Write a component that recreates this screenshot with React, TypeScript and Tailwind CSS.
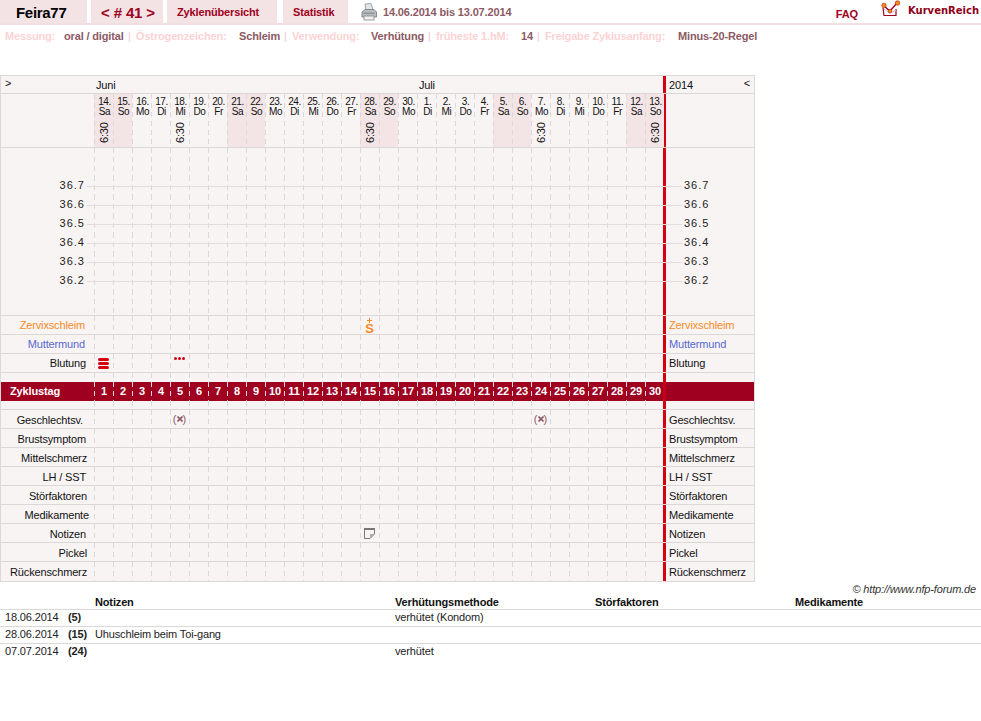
import React from "react";

const days: [string, string][] = [
  ["14.", "Sa"], ["15.", "So"], ["16.", "Mo"], ["17.", "Di"], ["18.", "Mi"], ["19.", "Do"], ["20.", "Fr"],
  ["21.", "Sa"], ["22.", "So"], ["23.", "Mo"], ["24.", "Di"], ["25.", "Mi"], ["26.", "Do"], ["27.", "Fr"],
  ["28.", "Sa"], ["29.", "So"], ["30.", "Mo"], ["1.", "Di"], ["2.", "Mi"], ["3.", "Do"], ["4.", "Fr"],
  ["5.", "Sa"], ["6.", "So"], ["7.", "Mo"], ["8.", "Di"], ["9.", "Mi"], ["10.", "Do"], ["11.", "Fr"],
  ["12.", "Sa"], ["13.", "So"],
];
const times = new Set([0, 4, 14, 23, 29]);

const dash = "bg-[linear-gradient(to_bottom,#ddd8d8_5px,transparent_5px)] bg-[length:1px_9px] bg-repeat-y bg-left-top";

function Cell({ children, cls = "" }: { children?: React.ReactNode; cls?: string }) {
  return <div className={"w-[19px] shrink-0 flex items-center justify-center " + dash + " " + cls}>{children}</div>;
}

function Printer() {
  return (
    <svg width="16" height="18" viewBox="0 0 16 18">
      <path d="M4 1 L10 0.5 L12 7 L5 8 Z" fill="#dfe6ec" stroke="#8a9298" strokeWidth="0.8" />
      <path d="M1 9 L4 6.5 L13 6.5 L15.5 9 L15.5 14 L1 14 Z" fill="#b9bec2" stroke="#777" strokeWidth="0.8" />
      <rect x="3" y="13" width="10" height="4" fill="#eef0f1" stroke="#888" strokeWidth="0.8" />
      <rect x="2.5" y="9.5" width="11" height="1.5" fill="#8d9397" />
    </svg>
  );
}

function Logo() {
  return (
    <svg width="22" height="18" viewBox="0 0 22 18">
      <path d="M2 8 L3 15.5 L15 15.5 L15 9" fill="none" stroke="#a00020" strokeWidth="1.2" />
      <path d="M3 6 L9 11 L16 3" fill="none" stroke="#a00020" strokeWidth="1.4" />
      <path d="M3 9 L9 13.5 L15 10" fill="none" stroke="#e4b9bf" strokeWidth="1" />
      <circle cx="3" cy="5.5" r="2.3" fill="#f08c10" stroke="#a00020" strokeWidth="0.5" />
      <circle cx="9" cy="11" r="1.9" fill="#f08c10" stroke="#a00020" strokeWidth="0.5" />
      <circle cx="16.5" cy="3" r="2.3" fill="#f08c10" stroke="#a00020" strokeWidth="0.5" />
    </svg>
  );
}

function Row({
  label,
  right,
  labelCls = "text-[#111] justify-end pr-[5px]",
  rightCls = "text-[#111]",
  marks = {},
  cls = "h-[19px]",
}: {
  label?: string;
  right?: string;
  labelCls?: string;
  rightCls?: string;
  marks?: Record<number, React.ReactNode>;
  cls?: string;
}) {
  return (
    <div className={"flex border-b border-[#ddd8d8] " + cls}>
      <div className={"w-[93px] shrink-0 flex items-center " + labelCls}>{label}</div>
      {days.map((_, i) => (
        <Cell key={i}>{marks[i]}</Cell>
      ))}
      <div className={"flex-1 border-l-[3px] border-[#d4000f] ml-[-1px] pl-[3px] flex items-center " + rightCls}>{right}</div>
    </div>
  );
}

const temps = ["36.7", "36.6", "36.5", "36.4", "36.3", "36.2"];

function TempRow({ t }: { t: string }) {
  return (
    <div className="flex h-[19px] relative">
      <div className="w-[93px] shrink-0 text-right pr-[9px] text-[11px] leading-[19px] tracking-[1px] text-[#222]">{t}</div>
      {days.map((_, i) => (
        <Cell key={i} />
      ))}
      <div className="flex-1 border-l-[3px] border-[#d4000f] ml-[-1px] pl-[18px] leading-[19px] tracking-[1px] text-[#222]">{t}</div>
      <div className="absolute left-[86px] w-[595px] top-[10px] h-px bg-[#e2dddd]" />
    </div>
  );
}

function SpacerRow({ h }: { h: string }) {
  return (
    <div className={"flex " + h}>
      <div className="w-[93px] shrink-0" />
      {days.map((_, i) => (
        <Cell key={i} />
      ))}
      <div className="flex-1 border-l-[3px] border-[#d4000f] ml-[-1px]" />
    </div>
  );
}

function Cross() {
  return (
    <span className="flex items-center text-[11px] leading-[11px] text-[#8c5a64] tracking-normal">
      <span>(</span>
      <svg width="6" height="6" viewBox="0 0 6 6">
        <path d="M0.5 0.5 L5.5 5.5 M5.5 0.5 L0.5 5.5" stroke="#8c5a64" strokeWidth="1.6" />
      </svg>
      <span>)</span>
    </span>
  );
}

const low = "text-[#111] justify-end pt-[2px] ";

export default function App() {
  return (
    <div className="w-[981px] h-[721px] bg-white overflow-hidden text-[11px] tracking-[-0.15px] font-['Liberation_Sans',Arial,sans-serif] text-[#111]">
      {/* top navigation */}
      <div className="h-[25px] border-b-2 border-[#f3dfe1] flex items-stretch">
        <div className="w-[87px] bg-[#f3e3e5] pl-[16px] text-[15px] leading-[25px] font-bold text-black tracking-[-0.3px]">Feira77</div>
        <div className="ml-[4px] w-[72px] bg-[#f3e3e5] pl-[2px] text-center text-[15px] leading-[25px] font-bold text-[#a00020]">&lt; # 41 &gt;</div>
        <div className="ml-[4px] w-[110px] bg-[#f3e3e5] pl-[10px] leading-[25px] font-bold text-[#a00020]">Zyklenübersicht</div>
        <div className="ml-[6px] w-[65px] bg-[#f3e3e5] pl-[10px] leading-[25px] font-bold text-[#a00020]">Statistik</div>
        <div className="ml-[13px] pt-[3px] w-[22px]"><Printer /></div>
        <div className="leading-[25px] font-bold text-[#8c5a64]">14.06.2014 bis 13.07.2014</div>
        <div className="ml-auto mr-[23px] pt-[7px] leading-[14px] font-bold text-[#a00020]">FAQ</div>
        <div className="w-[100px] flex items-start">
          <Logo />
          <span className="ml-[5px] pt-[4px] text-[10px] leading-[14px] tracking-normal font-bold text-[#8f0018] font-['DejaVu_Sans',sans-serif]">KurvenReich</span>
        </div>
      </div>

      {/* settings line */}
      <div className="h-[20px] flex items-center pt-[2px] pl-[5px] font-bold leading-[18px] whitespace-nowrap">
        <span className="w-[59px] text-[#fbd3d5]">Messung:</span>
        <span className="w-[64px] text-[#8c5a64]">oral / digital</span>
        <span className="w-[8px] text-[#f8c8cb] font-normal">|</span>
        <span className="w-[103px] text-[#fbd3d5]">Östrogenzeichen:</span>
        <span className="w-[45px] text-[#8c5a64]">Schleim</span>
        <span className="w-[8px] text-[#f8c8cb] font-normal">|</span>
        <span className="w-[79px] text-[#fbd3d5]">Verwendung:</span>
        <span className="w-[57px] text-[#8c5a64]">Verhütung</span>
        <span className="w-[8px] text-[#f8c8cb] font-normal">|</span>
        <span className="w-[85px] text-[#fbd3d5]">früheste 1.hM:</span>
        <span className="w-[16px] text-[#8c5a64]">14</span>
        <span className="w-[8px] text-[#f8c8cb] font-normal">|</span>
        <span className="w-[133px] text-[#fbd3d5]">Freigabe Zyklusanfang:</span>
        <span className="text-[#8c5a64]">Minus-20-Regel</span>
      </div>

      {/* chart table */}
      <div className="mt-[30px] w-[755px] bg-[#f9f4f4] border border-[#ddd8d8] text-[#111]">
        {/* month row */}
        <div className="flex h-[18px] border-b border-[#ddd8d8]">
          <div className="w-[93px] shrink-0 pl-[4px] leading-[15px]">&gt;</div>
          <div className="w-[325px] shrink-0 pl-[2px] leading-[19px]">Juni</div>
          <div className="w-[244px] shrink-0 leading-[19px]">Juli</div>
          <div className="flex-1 border-l-[3px] border-[#d4000f] pl-[3px] leading-[19px] flex justify-between">
            <span>2014</span>
            <span className="pr-[4px] leading-[15px]">&lt;</span>
          </div>
        </div>
        {/* dates row */}
        <div className="flex h-[54px] border-b border-[#ddd8d8]">
          <div className="w-[93px] shrink-0" />
          {days.map(([d, w], i) => (
            <div
              key={i}
              className={
                "w-[19px] shrink-0 relative text-center text-[10px] leading-[10px] pt-[3px] pl-[2px] tracking-[-0.4px] " +
                dash +
                " " +
                (w === "Sa" || w === "So" ? "bg-[#f3e4e6]" : "")
              }
            >
              <div>{d}</div>
              <div>{w}</div>
              {times.has(i) && (
                <div className="absolute left-[4px] top-[28px] text-[11px] leading-[12px] tracking-[-0.2px] [writing-mode:vertical-rl] rotate-180 h-[22px] text-center">6:30</div>
              )}
            </div>
          ))}
          <div className="flex-1 border-l-[3px] border-[#d4000f] ml-[-1px]" />
        </div>
        {/* temperature chart */}
        <div className="border-b border-[#ddd8d8]">
          <SpacerRow h="h-[28px]" />
          {temps.map((t) => (
            <TempRow key={t} t={t} />
          ))}
          <SpacerRow h="h-[25px]" />
        </div>
        <Row
          label="Zervixschleim"
          labelCls="text-[#f58a1f] justify-end pr-[9px]"
          right="Zervixschleim"
          rightCls="text-[#f58a1f]"
          marks={{
            14: (
              <span className="flex flex-col items-center text-[#f58a1f] font-bold">
                <svg width="5" height="5" viewBox="0 0 5 5" className="mb-px">
                  <path d="M0 2.5 H5 M2.5 0 V5" stroke="#f58a1f" strokeWidth="1" />
                </svg>
                <span className="text-[13px] leading-[9px]">S</span>
              </span>
            ),
          }}
        />
        <Row label="Muttermund" labelCls="text-[#5568d0] justify-end pr-[9px]" right="Muttermund" rightCls="text-[#5568d0]" />
        <Row
          label="Blutung"
          labelCls="text-[#111] justify-end pr-[8px]"
          right="Blutung"
          marks={{
            0: (
              <span className="flex flex-col gap-px">
                <span className="block w-[11px] h-[3px] rounded-[2px] bg-[#d4000f]" />
                <span className="block w-[11px] h-[3px] rounded-[2px] bg-[#d4000f]" />
                <span className="block w-[11px] h-[3px] rounded-[2px] bg-[#d4000f]" />
              </span>
            ),
            4: (
              <span className="flex gap-px -mt-[9px]">
                <span className="block w-[3px] h-[3px] rounded-full bg-[#d4000f]" />
                <span className="block w-[3px] h-[3px] rounded-full bg-[#d4000f]" />
                <span className="block w-[3px] h-[3px] rounded-full bg-[#d4000f]" />
              </span>
            ),
          }}
        />
        <SpacerRow h="h-[9px]" />
        {/* cycle day band */}
        <div className="flex h-[19px] bg-[#a00020] text-white font-bold tracking-normal">
          <div className="w-[93px] shrink-0 pl-[9px] leading-[19px] tracking-[-0.15px]">Zyklustag</div>
          {days.map((_, i) => (
            <div
              key={i}
              className="w-[19px] shrink-0 pl-px text-center leading-[19px] bg-[linear-gradient(to_bottom,#eed5d9_5px,transparent_5px)] bg-[length:1px_9px] bg-repeat-y bg-left-top"
            >
              {i + 1}
            </div>
          ))}
          <div className="flex-1 border-l-[3px] border-[#c40018] ml-[-1px]" />
        </div>
        <Row cls="h-[9px]" />
        <Row
          label="Geschlechtsv."
          labelCls={low + "pr-[11px]"}
          rightCls="text-[#111] pt-[2px]"
          right="Geschlechtsv."
          marks={{ 4: <Cross />, 23: <Cross /> }}
        />
        <Row label="Brustsymptom" labelCls={low + "pr-[8px]"} rightCls="text-[#111] pt-[2px]" right="Brustsymptom" />
        <Row label="Mittelschmerz" labelCls={low + "pr-[7px]"} rightCls="text-[#111] pt-[2px]" right="Mittelschmerz" />
        <Row label="LH / SST" labelCls={low + "pr-[8px]"} rightCls="text-[#111] pt-[2px]" right="LH / SST" />
        <Row label="Störfaktoren" labelCls={low + "pr-[7px]"} rightCls="text-[#111] pt-[2px]" right="Störfaktoren" />
        <Row label="Medikamente" labelCls={low + "pr-[5px]"} rightCls="text-[#111] pt-[2px]" right="Medikamente" />
        <Row
          label="Notizen"
          labelCls={low + "pr-[8px]"}
          rightCls="text-[#111] pt-[2px]"
          right="Notizen"
          marks={{
            14: (
              <svg width="11" height="11" viewBox="0 0 11 11">
                <path d="M0.5 0.5 H10.5 V6 L6 10.5 H0.5 Z" fill="#f7f3ef" stroke="#777" />
                <rect x="0" y="0" width="11" height="2" fill="#777" />
                <path d="M6 10 V6 H10 Z" fill="#aaa" />
              </svg>
            ),
          }}
        />
        <Row label="Pickel" labelCls={low + "pr-[7px]"} rightCls="text-[#111] pt-[2px]" right="Pickel" />
        <Row label="Rückenschmerz" labelCls={low + "pr-[7px]"} rightCls="text-[#111] pt-[2px]" right="Rückenschmerz" cls="h-[19px] !border-b-0" />
      </div>

      {/* copyright */}
      <div className="h-[14px] pr-[5px] text-right italic text-[#333] leading-[14px]">© http://www.nfp-forum.de</div>

      {/* notes table */}
      <div className="grid grid-cols-[5px_63px_27px_300px_200px_200px_1fr] text-[#222]">
        <div className="col-span-7 grid grid-cols-subgrid h-[13px] leading-[13px] border-b border-[#ddd8d8] font-bold text-[#111] box-content">
          <span /><span /><span /><span>Notizen</span><span>Verhütungsmethode</span><span>Störfaktoren</span><span>Medikamente</span>
        </div>
        {[
          ["18.06.2014", "(5)", "", "verhütet (Kondom)"],
          ["28.06.2014", "(15)", "Uhuschleim beim Toi-gang", ""],
          ["07.07.2014", "(24)", "", "verhütet"],
        ].map(([d, n, note, m], i) => (
          <div key={d} className={"col-span-7 grid grid-cols-subgrid h-[17px] leading-[14px] " + (i < 2 ? "border-b border-[#ddd8d8]" : "")}>
            <span />
            <span>{d}</span>
            <span className="font-bold">{n}</span>
            <span>{note}</span>
            <span>{m}</span>
            <span />
            <span />
          </div>
        ))}
      </div>
    </div>
  );
}
